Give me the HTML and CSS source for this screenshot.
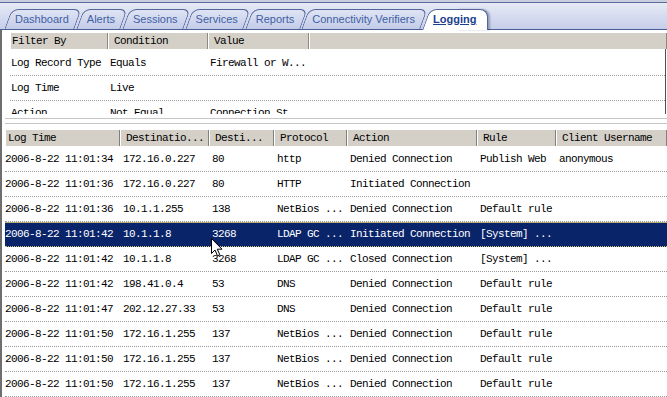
FILE: index.html
```html
<!DOCTYPE html>
<html lang="en">
<head>
    <meta charset="UTF-8">
    <title>Logging</title>
    <link rel="stylesheet" href="styles.css">
</head>
<body>
    <div id="tab-bar">
        <div class="tab">Dashboard</div>
        <div class="tab">Alerts</div>
        <div class="tab">Sessions</div>
        <div class="tab">Services</div>
        <div class="tab">Reports</div>
        <div class="tab">Connectivity Verifiers</div>
        <div class="tab active">Logging</div>
    </div>
    <div id="main">
        <div id="filter-panel">
            <div class="filter-row filter-head">
                <span>Filter By</span>
                <span>Condition</span>
                <span>Value</span>
                <span></span>
            </div>
            <div id="filter-body">
                <div class="filter-row">
                    <span>Log Record Type</span>
                    <span>Equals</span>
                    <span>Firewall or W...</span>
                    <span></span>
                </div>
                <div class="filter-row">
                    <span>Log Time</span>
                    <span>Live</span>
                    <span></span>
                    <span></span>
                </div>
                <div class="filter-row">
                    <span>Action</span>
                    <span>Not Equal</span>
                    <span>Connection St...</span>
                    <span></span>
                </div>
            </div>
        </div>
        <div class="splitter"></div>
        <div id="log-table">
            <div class="log-row log-head">
                <span>Log Time</span>
                <span>Destinatio...</span>
                <span>Desti...</span>
                <span>Protocol</span>
                <span>Action</span>
                <span>Rule</span>
                <span>Client Username</span>
            </div>
            <div class="log-row">
                <span>2006-8-22 11:01:34</span><span>172.16.0.227</span><span>80</span><span>http</span><span>Denied Connection</span><span>Publish Web</span><span>anonymous</span>
            </div>
            <div class="log-row">
                <span>2006-8-22 11:01:36</span><span>172.16.0.227</span><span>80</span><span>HTTP</span><span>Initiated Connection</span><span></span><span></span>
            </div>
            <div class="log-row">
                <span>2006-8-22 11:01:36</span><span>10.1.1.255</span><span>138</span><span>NetBios ...</span><span>Denied Connection</span><span>Default rule</span><span></span>
            </div>
            <div class="log-row selected">
                <span>2006-8-22 11:01:42</span><span>10.1.1.8</span><span>3268</span><span>LDAP GC ...</span><span>Initiated Connection</span><span>[System] ...</span><span></span>
            </div>
            <div class="log-row">
                <span>2006-8-22 11:01:42</span><span>10.1.1.8</span><span>3268</span><span>LDAP GC ...</span><span>Closed Connection</span><span>[System] ...</span><span></span>
            </div>
            <div class="log-row">
                <span>2006-8-22 11:01:42</span><span>198.41.0.4</span><span>53</span><span>DNS</span><span>Denied Connection</span><span>Default rule</span><span></span>
            </div>
            <div class="log-row">
                <span>2006-8-22 11:01:47</span><span>202.12.27.33</span><span>53</span><span>DNS</span><span>Denied Connection</span><span>Default rule</span><span></span>
            </div>
            <div class="log-row">
                <span>2006-8-22 11:01:50</span><span>172.16.1.255</span><span>137</span><span>NetBios ...</span><span>Denied Connection</span><span>Default rule</span><span></span>
            </div>
            <div class="log-row">
                <span>2006-8-22 11:01:50</span><span>172.16.1.255</span><span>137</span><span>NetBios ...</span><span>Denied Connection</span><span>Default rule</span><span></span>
            </div>
            <div class="log-row">
                <span>2006-8-22 11:01:50</span><span>172.16.1.255</span><span>137</span><span>NetBios ...</span><span>Denied Connection</span><span>Default rule</span><span></span>
            </div>
        </div>
    </div>
    <svg class="cursor" width="12" height="19" viewBox="0 0 12 19">
        <path d="M0.5 0.5 L0.5 15.5 L4 12 L6.5 17.8 L8.8 16.8 L6.3 11.2 L11 11.2 Z" fill="#fff" stroke="#000" stroke-width="1"/>
    </svg>
</body>
</html>
```

FILE: styles.css
```css
body, html {
    margin: 0;
    padding: 0;
    width: 667px;
    height: 397px;
    overflow: hidden;
    background: #fff;
}
body {
    position: relative;
    font-family: "Liberation Mono", "DejaVu Sans Mono", monospace;
    font-size: 11px;
    letter-spacing: -0.6px;
    color: #000;
}
#tab-bar {
    height: 30px;
    box-sizing: border-box;
    display: flex;
    align-items: flex-end;
    padding-left: 6px;
    border-bottom: 1px solid #4a5c94;
    background: linear-gradient(to bottom, #c9cfdf 0, #c9cfdf 2px, #5b6c9c 2px, #5b6c9c 3px, #e6eaf6 3px, #c6cee9 100%);
}
.tab {
    position: relative;
    isolation: isolate;
    height: 20px;
    padding: 0 9px;
    display: flex;
    align-items: center;
    font-family: "Liberation Sans", Arial, sans-serif;
    font-size: 11px;
    letter-spacing: 0;
    color: #3f5fa3;
    white-space: nowrap;
}
.tab::before {
    content: '';
    position: absolute;
    top: 0;
    bottom: 0;
    left: 2px;
    right: 0;
    z-index: -1;
    background: linear-gradient(to bottom, #dfe4f4, #c3cbe8);
    border: 1px solid #53659b;
    border-bottom: none;
    border-radius: 7px 7px 0 0;
    transform: skewX(-20deg);
}
.tab.active {
    font-weight: bold;
    text-decoration: underline;
    color: #1d3f8e;
}
.tab.active::before {
    background: #fff;
    bottom: -1px;
    right: 12px;
}
.tab.active::after {
    content: '';
    position: absolute;
    top: 0;
    bottom: -1px;
    right: -3px;
    width: 30px;
    z-index: -1;
    background: #fff;
    border-top: 1px solid #53659b;
    border-right: 1px solid #53659b;
    border-top-right-radius: 8px;
    box-shadow: 2px 0 2px rgba(40, 50, 90, 0.35);
}
#main {
    height: 367px;
    border-left: 2px solid #6e6e6e;
    overflow: hidden;
}
/* filter list is scrolled so its last row is only half shown */
#filter-panel {
    margin: 3px 0 0 8px;
    height: 81px;
    overflow: hidden;
}
.filter-row {
    display: grid;
    grid-template-columns: 98px 100px 101px 1fr;
    height: 25px;
    line-height: 24px;
    border-bottom: 1px dotted #9a9a9a;
    box-sizing: border-box;
    white-space: nowrap;
}
.filter-row span {
    padding-left: 2px;
    overflow: hidden;
}
.filter-row span:first-child {
    padding-left: 1px;
}
.filter-head {
    height: 16px;
    line-height: 16px;
    border-bottom: none;
    background: #d4d0c8;
}
.filter-head span {
    padding-left: 6px;
    border-right: 1px solid #8c8a84;
    box-shadow: inset 1px 0 0 #fff;
}
.filter-head span:first-child {
    padding-left: 2px;
}
#filter-body {
    padding-top: 2px;
    margin-right: 1px;
    border-right: 1px solid #505050;
}
.splitter {
    margin: 4px 0 6px 3px;
    height: 4px;
    border-top: 1px solid #c6c6c6;
    border-bottom: 1px solid #c6c6c6;
}
#log-table {
    margin-left: 3px;
}
.log-row {
    display: grid;
    grid-template-columns: 115px 89px 65px 73px 130px 79px 1fr;
    height: 25px;
    line-height: 24px;
    border-bottom: 1px dotted #9a9a9a;
    box-sizing: border-box;
    white-space: nowrap;
}
.log-row span {
    padding-left: 3px;
}
.log-row span:first-child {
    padding-left: 0;
}
.log-head {
    height: 16px;
    line-height: 16px;
    border-bottom: none;
    background: #d4d0c8;
    margin-bottom: 1px;
}
.log-head span {
    padding-left: 6px;
    border-right: 1px solid #808080;
    box-shadow: inset 1px 0 0 #fff;
    overflow: hidden;
}
.log-head span:first-child {
    padding-left: 3px;
}
.log-row.selected {
    background: #0a246a;
    color: #fff;
    border-bottom: 1px dotted #c8bd7a;
    box-shadow: inset 0 1px 0 #b8ae78;
}
.cursor {
    position: absolute;
    left: 211px;
    top: 238px;
}
```
